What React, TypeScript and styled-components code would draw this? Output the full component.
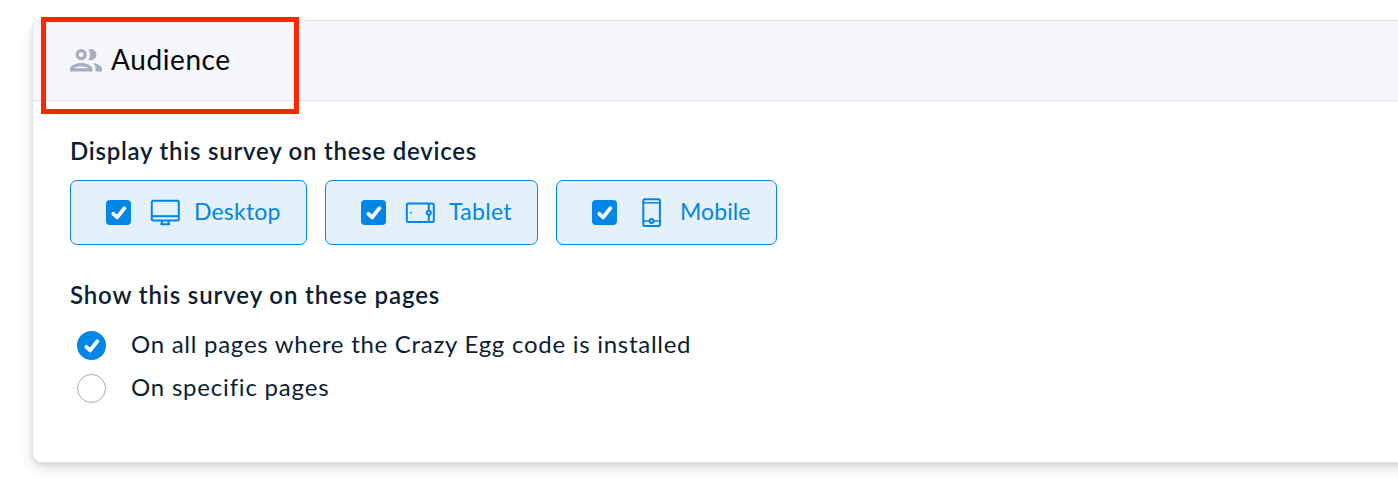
import React from "react";
import styled, { createGlobalStyle } from "styled-components";

const blue = "#0086e6";

const GlobalStyle = createGlobalStyle`
  * { box-sizing: border-box; }
  body {
    margin: 0;
    background: #fff;
    overflow: hidden;
    font-family: "Lato", "Liberation Sans", sans-serif;
    color: #0b1e33;
  }
`;

const Page = styled.main`
  height: 498px;
  padding: 20px 0 0 32px;
  overflow: hidden;
`;

const Card = styled.section`
  position: relative;
  width: 1400px;
  height: 443px;
  border: 1px solid #dfe3ee;
  border-radius: 9px;
  background: #fff;
  box-shadow: 0 6px 14px rgba(0, 0, 0, 0.12), 0 2px 4px rgba(0, 0, 0, 0.08);
`;

const CardHeader = styled.header`
  display: flex;
  align-items: center;
  gap: 9px;
  height: 80px;
  padding: 0 37px;
  border-bottom: 1px solid #dde3ee;
  border-radius: 8px 8px 0 0;
  background: #f6f7fc;
`;

const Title = styled.h1`
  margin: 0;
  padding-bottom: 4px;
  font-size: 28px;
  line-height: 36px;
  font-weight: 400;
  letter-spacing: 0.6px;
  color: #050608;
`;

const Highlight = styled.div`
  position: absolute;
  top: -4px;
  left: 8px;
  width: 258px;
  height: 97px;
  border: 5px solid #ff2600;
`;

const CardBody = styled.div`
  padding: 35px 37px;
`;

const SectionTitle = styled.h2<{ $spacing: number }>`
  margin: 0;
  font-size: 24px;
  line-height: 30px;
  font-weight: 600;
  letter-spacing: ${(p) => p.$spacing}px;
`;

const Devices = styled.div`
  display: flex;
  gap: 18px;
  margin: 14px 0 35px;
`;

const DeviceButton = styled.label<{ $width: number }>`
  display: flex;
  align-items: center;
  width: ${(p) => p.$width}px;
  height: 65px;
  padding-left: 35px;
  border: 1px solid ${blue};
  border-radius: 7px;
  background: #e4f1fb;
  color: ${blue};
`;

const CheckMark = styled.span<{ $round?: boolean }>`
  display: flex;
  flex: none;
  width: ${(p) => (p.$round ? 29 : 25)}px;
  height: ${(p) => (p.$round ? 29 : 25)}px;
  align-items: center;
  justify-content: center;
  border-radius: ${(p) => (p.$round ? "50%" : "4px")};
  background: ${blue};
`;

const DeviceIcon = styled.svg`
  flex: none;
  width: 30px;
  height: 30px;
  margin: 0 14px 0 19px;
  fill: none;
  stroke: currentColor;
  stroke-width: 2;
`;

const DeviceLabel = styled.span<{ $spacing: number }>`
  padding-bottom: 3px;
  font-size: 23px;
  line-height: 30px;
  letter-spacing: ${(p) => p.$spacing}px;
`;

const Options = styled.div`
  display: grid;
  grid-auto-rows: 43px;
  margin-top: 14px;
  padding-left: 7px;
`;

const Option = styled.label`
  display: flex;
  align-items: center;
  gap: 25px;
`;

const EmptyRadio = styled.span`
  width: 29px;
  height: 29px;
  border: 1px solid #a5adbf;
  border-radius: 50%;
`;

const OptionLabel = styled.span<{ $spacing: number }>`
  padding-bottom: 3px;
  font-size: 24px;
  line-height: 30px;
  letter-spacing: ${(p) => p.$spacing}px;
`;

function Tick() {
  return (
    <svg width="16" height="16" viewBox="0 0 16 16" fill="none" stroke="#fff" strokeWidth="3.8" strokeLinecap="round" strokeLinejoin="round">
      <path d="M2.4 8.8 6.2 12.4 13.4 3.2" />
    </svg>
  );
}

function PeopleIcon() {
  return (
    <svg width="32" height="22.4" viewBox="2 5 20 14" fill="#a7aec0">
      <path d="M9 13.75c-2.34 0-7 1.17-7 3.5V19h14v-1.75c0-2.33-4.66-3.5-7-3.5zM4.34 17c.84-.58 2.87-1.25 4.66-1.25s3.82.67 4.66 1.25H4.34zM9 12c1.93 0 3.5-1.57 3.5-3.5S10.93 5 9 5 5.5 6.57 5.5 8.5 7.07 12 9 12zm0-5c.83 0 1.5.67 1.5 1.5S9.83 10 9 10s-1.5-.67-1.5-1.5S8.17 7 9 7zm7.04 6.81c1.16.84 1.96 1.96 1.96 3.44V19h4v-1.75c0-2.02-3.5-3.17-5.96-3.44zM15 12c1.93 0 3.5-1.57 3.5-3.5S16.93 5 15 5c-.54 0-1.04.13-1.5.35.63.89 1 1.98 1 3.15s-.37 2.26-1 3.15c.46.22.96.35 1.5.35z" />
    </svg>
  );
}

const devices = [
  {
    name: "Desktop",
    width: 237,
    spacing: 0.2,
    icon: (
      <>
        <rect x="1.8" y="2.8" width="27" height="19.8" rx="1.5" />
        <path d="M2 18.2h27" />
        <path d="M12.4 23 11.2 26.2h8l-1.2-3.2" strokeLinejoin="round" />
      </>
    ),
  },
  {
    name: "Tablet",
    width: 213,
    spacing: 0.3,
    icon: (
      <>
        <rect x="1.8" y="5.5" width="27" height="18.5" rx="1.5" />
        <path d="M23.8 5.5v6.8m0 4.7v7" />
        <circle cx="23.8" cy="14.7" r="2" />
        <circle cx="5.8" cy="14.7" r="1" fill="currentColor" stroke="none" />
      </>
    ),
  },
  {
    name: "Mobile",
    width: 221,
    spacing: 0.1,
    icon: (
      <>
        <rect x="7.3" y="1.3" width="16.6" height="26.6" rx="1.5" />
        <path d="M7.5 4.8h16.5" strokeWidth="1.5" />
        <path d="M7.5 22.9h5.6m5 0h5.6" strokeWidth="1.5" />
        <circle cx="15.6" cy="22.9" r="2" />
      </>
    ),
  },
];

export default function App() {
  return (
    <>
      <GlobalStyle />
      <Page>
        <Card>
          <CardHeader>
            <PeopleIcon />
            <Title>Audience</Title>
          </CardHeader>
          <CardBody>
            <SectionTitle $spacing={0.76}>Display this survey on these devices</SectionTitle>
            <Devices>
              {devices.map((d) => (
                <DeviceButton key={d.name} $width={d.width}>
                  <CheckMark>
                    <Tick />
                  </CheckMark>
                  <DeviceIcon viewBox="0 0 30 30">{d.icon}</DeviceIcon>
                  <DeviceLabel $spacing={d.spacing}>{d.name}</DeviceLabel>
                </DeviceButton>
              ))}
            </Devices>
            <SectionTitle $spacing={0.88}>Show this survey on these pages</SectionTitle>
            <Options>
              <Option>
                <CheckMark $round>
                  <Tick />
                </CheckMark>
                <OptionLabel $spacing={0.73}>On all pages where the Crazy Egg code is installed</OptionLabel>
              </Option>
              <Option>
                <EmptyRadio />
                <OptionLabel $spacing={0.8}>On specific pages</OptionLabel>
              </Option>
            </Options>
          </CardBody>
          <Highlight />
        </Card>
      </Page>
    </>
  );
}
